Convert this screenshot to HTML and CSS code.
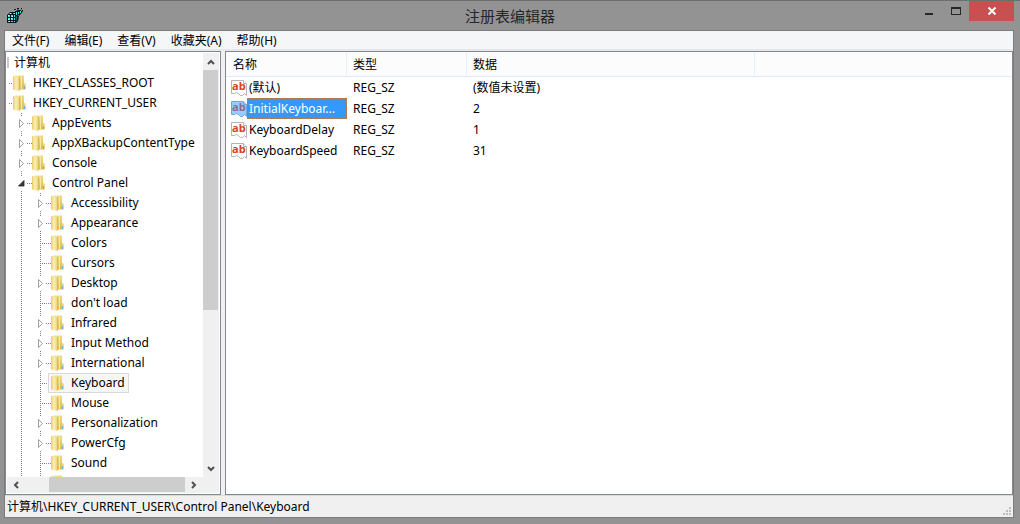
FILE: index.html
```
<!DOCTYPE html>
<html lang="zh-CN">

<head>
    <meta charset="utf-8">
    <meta name="viewport" content="width=device-width,initial-scale=1.0">
    <title>注册表编辑器</title>
    <link rel="stylesheet" href="styles.css">
</head>

<body>

    <svg class="defs" aria-hidden="true">
        <defs>
            <linearGradient id="front" x1="0" x2="1">
                <stop offset="0" stop-color="#e6cc6c" />
                <stop offset=".5" stop-color="#fbf1b4" />
                <stop offset="1" stop-color="#ecd67c" />
            </linearGradient>
            <linearGradient id="back" x1="0" x2=".3" y2="1">
                <stop offset="0" stop-color="#f5e594" />
                <stop offset="1" stop-color="#dcbe54" />
            </linearGradient>
            <symbol id="folder" viewBox="0 0 13 16">
                <path d="M2 .5H11V8L12.700 9V14.500H2Z" fill="url(#back)" />
                <path d="M0 1L6 2.500V16L0 14.500Z" fill="url(#front)" />
                <path d="M6 2.500L7 1.500V15L6 16Z" fill="#d8bb58" />
                <path d="M8 2H9V14H8Z" fill="#f6e9a6" />
                <path d="M11 8.500H12.700V14H11Z" fill="#efdc8c" />
                <path d="M11 11H12V14H11Z" fill="#5ab8e6" />
            </symbol>
            <symbol id="closed" viewBox="0 0 9 11">
                <path d="M2.500 1.500L6.500 5.500L2.500 9.500Z" fill="#fff" stroke="#a0a0a0" />
            </symbol>
            <symbol id="open" viewBox="0 0 9 11">
                <path d="M7 2.500V8H1.500Z" fill="#3c3c3c" stroke="#1e1e1e" stroke-width=".8" />
            </symbol>
            <symbol id="string" viewBox="0 0 16 16">
                <path class="page" d="M.5 .5H12.500L15.500 3.500V15.500L13.500 13.500L11.500 15.500H9.500L7.500 13.500L5.500 12.500L3.500 13.500H.5Z" />
                <path class="page" d="M12.500 .5V3.500H15.500" />
                <text x="1" y="10" class="ab">ab</text>
            </symbol>
        </defs>
    </svg>

    <header class="titlebar">
        <svg class="app-icon" viewBox="0 0 16 16" aria-hidden="true">
            <path d="M0 7L3 4H8V2H7V1H9V3L11 2L10 1V0H12V2H14V0H15V2H16V3L14 6L12 8L11 13L9 15H0Z" fill="#07191b" />
            <path d="M2 6L3 5H5L4 6ZM6 6L7 5H8V6Z" fill="#bff" />
            <path d="M1 7H3V9H1ZM4 7H6V9H4ZM1 10H3V12H1ZM4 10H6V12H4ZM1 13H3V14H1ZM4 13H6V14H4ZM7 7H8V9H7ZM7 10H8V12H7ZM7 13H8V14H7Z" fill="#3ee6ea" />
            <path d="M1 7H2V8H1ZM5 8H6V9H5ZM1 11H2V12H1ZM4 10H5V11H4ZM2 13H3V14H2Z" fill="#e8ffff" />
            <path d="M9 9L10 8V10L9 11ZM9 12L10 11V12L9 13ZM11 7H12V8H11Z" fill="#168f94" />
            <path d="M9 4H10V7H9ZM11 4H12V6H11ZM13 3H14V5H13ZM8 2H9V3H8Z" fill="#3ee6ea" />
            <path d="M11 1H12V2H11ZM14 1H15V3H14Z" fill="#20a0a6" />
        </svg>
        <h1>注册表编辑器</h1>
        <div class="controls">
            <button type="button" class="minimize" aria-label="最小化"><span></span></button>
            <button type="button" class="maximize" aria-label="最大化"><span></span></button>
            <button type="button" class="close" aria-label="关闭">
                <svg viewBox="0 0 10 8"><path d="M1.500 .5L8.500 7.500M8.500 .5L1.500 7.500" /></svg>
            </button>
        </div>
    </header>

    <main class="client">
        <nav class="menu">
            <button type="button">文件(F)</button>
            <button type="button">编辑(E)</button>
            <button type="button">查看(V)</button>
            <button type="button">收藏夹(A)</button>
            <button type="button">帮助(H)</button>
        </nav>

        <div class="panes">
            <section class="pane tree-pane">
                <div class="tree">
                    <div class="root">计算机</div>
                    <ul class="hives">
                        <li><div class="row hive"><span class="key"><svg><use href="#folder" /></svg>HKEY_CLASSES_ROOT</span></div></li>
                        <li>
                            <div class="row hive"><span class="key"><svg><use href="#folder" /></svg>HKEY_CURRENT_USER</span></div>
                            <ul class="branch">
                                <li class="row"><button type="button" class="toggle" aria-label="展开"><svg><use href="#closed" /></svg></button><span class="key"><svg><use href="#folder" /></svg>AppEvents</span></li>
                                <li class="row"><button type="button" class="toggle" aria-label="展开"><svg><use href="#closed" /></svg></button><span class="key"><svg><use href="#folder" /></svg>AppXBackupContentType</span></li>
                                <li class="row"><button type="button" class="toggle" aria-label="展开"><svg><use href="#closed" /></svg></button><span class="key"><svg><use href="#folder" /></svg>Console</span></li>
                                <li>
                                    <div class="row"><button type="button" class="toggle" aria-label="折叠"><svg><use href="#open" /></svg></button><span class="key"><svg><use href="#folder" /></svg>Control Panel</span></div>
                                    <ul class="branch">
                                        <li class="row"><button type="button" class="toggle" aria-label="展开"><svg><use href="#closed" /></svg></button><span class="key"><svg><use href="#folder" /></svg>Accessibility</span></li>
                                        <li class="row"><button type="button" class="toggle" aria-label="展开"><svg><use href="#closed" /></svg></button><span class="key"><svg><use href="#folder" /></svg>Appearance</span></li>
                                        <li class="row"><span class="key"><svg><use href="#folder" /></svg>Colors</span></li>
                                        <li class="row"><span class="key"><svg><use href="#folder" /></svg>Cursors</span></li>
                                        <li class="row"><button type="button" class="toggle" aria-label="展开"><svg><use href="#closed" /></svg></button><span class="key"><svg><use href="#folder" /></svg>Desktop</span></li>
                                        <li class="row"><span class="key"><svg><use href="#folder" /></svg>don't load</span></li>
                                        <li class="row"><button type="button" class="toggle" aria-label="展开"><svg><use href="#closed" /></svg></button><span class="key"><svg><use href="#folder" /></svg>Infrared</span></li>
                                        <li class="row"><button type="button" class="toggle" aria-label="展开"><svg><use href="#closed" /></svg></button><span class="key"><svg><use href="#folder" /></svg>Input Method</span></li>
                                        <li class="row"><button type="button" class="toggle" aria-label="展开"><svg><use href="#closed" /></svg></button><span class="key"><svg><use href="#folder" /></svg>International</span></li>
                                        <li class="row"><span class="key selected"><svg><use href="#folder" /></svg>Keyboard</span></li>
                                        <li class="row"><span class="key"><svg><use href="#folder" /></svg>Mouse</span></li>
                                        <li class="row"><button type="button" class="toggle" aria-label="展开"><svg><use href="#closed" /></svg></button><span class="key"><svg><use href="#folder" /></svg>Personalization</span></li>
                                        <li class="row"><button type="button" class="toggle" aria-label="展开"><svg><use href="#closed" /></svg></button><span class="key"><svg><use href="#folder" /></svg>PowerCfg</span></li>
                                        <li class="row"><span class="key"><svg><use href="#folder" /></svg>Sound</span></li>
                                        <li class="row"><span class="key"><svg><use href="#folder" /></svg></span></li>
                                    </ul>
                                </li>
                            </ul>
                        </li>
                    </ul>
                </div>
                <div class="scroll vertical">
                    <button type="button" aria-label="向上"><svg viewBox="0 0 8 8"><path d="M1 6L4 3L7 6" /></svg></button>
                    <div class="track"><div class="thumb"></div></div>
                    <button type="button" aria-label="向下"><svg viewBox="0 0 8 8"><path d="M1 2L4 5L7 2" /></svg></button>
                </div>
                <div class="scroll horizontal">
                    <button type="button" aria-label="向左"><svg viewBox="0 0 8 8"><path d="M6 1L3 4L6 7" /></svg></button>
                    <div class="track"><div class="thumb"></div></div>
                    <button type="button" aria-label="向右"><svg viewBox="0 0 8 8"><path d="M2 1L5 4L2 7" /></svg></button>
                </div>
            </section>

            <section class="pane value-pane">
                <table>
                    <thead>
                        <tr>
                            <th class="name">名称</th>
                            <th class="type">类型</th>
                            <th class="data">数据</th>
                            <th class="rest"></th>
                        </tr>
                    </thead>
                    <tbody>
                        <tr>
                            <td class="value"><div><svg><use href="#string" /></svg><span>(默认)</span></div></td>
                            <td>REG_SZ</td>
                            <td>(数值未设置)</td>
                            <td></td>
                        </tr>
                        <tr class="active">
                            <td class="value"><div><svg><use href="#string" /></svg><span>InitialKeyboar...</span></div></td>
                            <td>REG_SZ</td>
                            <td>2</td>
                            <td></td>
                        </tr>
                        <tr>
                            <td class="value"><div><svg><use href="#string" /></svg><span>KeyboardDelay</span></div></td>
                            <td>REG_SZ</td>
                            <td>1</td>
                            <td></td>
                        </tr>
                        <tr>
                            <td class="value"><div><svg><use href="#string" /></svg><span>KeyboardSpeed</span></div></td>
                            <td>REG_SZ</td>
                            <td>31</td>
                            <td></td>
                        </tr>
                    </tbody>
                </table>
            </section>
        </div>

        <footer class="status">
            <span>计算机\HKEY_CURRENT_USER\Control Panel\Keyboard</span>
            <svg class="grip" viewBox="0 0 8 8" aria-hidden="true">
                <path d="M6 0h2v2h-2zM3 3h2v2h-2zM6 3h2v2h-2zM0 6h2v2h-2zM3 6h2v2h-2zM6 6h2v2h-2z" />
            </svg>
        </footer>
    </main>

</body>

</html>
```
FILE: styles.css
```
* {
    box-sizing: border-box;
}

body {
    margin: 0;
    height: 100vh;
    padding-bottom: 6px;
    border-top: 1px solid #6e6e6e;
    background-color: #939393;
    color: #000;
    font-family: "Noto Sans", "Noto Sans CJK SC", sans-serif;
    font-size: 12px;
    line-height: 20px;
    display: flex;
    flex-direction: column;
    overflow: hidden;
}

button {
    margin: 0;
    padding: 0;
    border: 0;
    background: none;
    color: inherit;
    font: inherit;
}

svg {
    display: block;
    flex: none;
}

ul {
    margin: 0;
    padding: 0;
    list-style: none;
}

.defs {
    position: absolute;
    width: 0;
    height: 0;
}

/* title bar */

.titlebar {
    height: 29px;
    flex: none;
    padding: 0 6px;
    display: grid;
    grid-template-columns: 1fr auto 1fr;
    align-items: center;
}

.app-icon {
    width: 16px;
    height: 16px;
    margin-left: 1px;
}

.titlebar h1 {
    margin: 0;
    color: #262626;
    font-size: 15px;
    font-weight: normal;
}

.controls {
    align-self: start;
    display: flex;
    justify-content: flex-end;
}

.controls button {
    width: 27px;
    height: 20px;
    display: flex;
    align-items: center;
    justify-content: center;
}

.minimize span {
    width: 8px;
    height: 2px;
    margin-top: 6px;
    background-color: #262626;
}

.maximize span {
    width: 10px;
    height: 8px;
    border: 1px solid #262626;
    border-top-width: 2px;
}

.controls .close {
    width: 45px;
    background-color: #c75050;
}

.close svg {
    width: 10px;
    height: 8px;
    fill: none;
    stroke: #fff;
    stroke-width: 2;
}

/* client area */

.client {
    flex: 1;
    min-height: 0;
    margin: 0 6px 0 4px;
    border: 1px solid #7c7c7c;
    background-color: #f0f0f0;
    display: flex;
    flex-direction: column;
}

.menu {
    height: 20px;
    flex: none;
    background-color: #f5f6f7;
    border-bottom: 2px solid #e8e8ec;
    display: flex;
    gap: 1px;
}

.menu button {
    padding: 0 7px;
}

.panes {
    flex: 1;
    min-height: 0;
    display: flex;
    gap: 4px;
}

.pane {
    border: 1px solid #828790;
    background-color: #fff;
}

/* key tree */

.tree-pane {
    width: 216px;
    flex: none;
    padding: 1px;
    display: grid;
    grid-template: minmax(0, 1fr) 16px / minmax(0, 1fr) 16px;
}

.tree {
    overflow: hidden;
    white-space: nowrap;
}

.root {
    height: 20px;
    padding-left: 7px;
    background: linear-gradient(#c8c8c8, #c8c8c8) 0 4px / 2px 11px no-repeat;
}

.row {
    height: 20px;
    padding-left: 12px;
    display: flex;
    background: repeating-linear-gradient(90deg, #808080 0 1px, transparent 1px 2px) 4px 10px / 11px 1px no-repeat;
    position: relative;
}

.row.hive {
    padding-left: 3px;
    background-position: 2px 10px;
    background-size: 4px 1px;
}

.branch {
    padding-left: 10px;
    background: repeating-linear-gradient(#808080 0 1px, transparent 1px 2px) 14px 0 / 1px 100% no-repeat;
}

.branch .branch {
    padding-left: 19px;
    background-position: 23px 0;
}

/* the white box breaks the guide lines around the arrow */
.toggle {
    position: absolute;
    left: 0;
    top: 3px;
    width: 10px;
    height: 14px;
    background-color: #fff;
}

.toggle svg {
    width: 9px;
    height: 11px;
}

.key {
    height: 20px;
    padding: 0 3px 0 2px;
    border: 1px solid transparent;
    line-height: 18px;
    display: flex;
    align-items: center;
    gap: 7px;
}

.key svg {
    width: 13px;
    height: 16px;
}

.key.selected {
    border-color: #d9d9d9;
    background-color: #f7f7f7;
}

/* scroll bars */

.scroll {
    background-color: #f0f0f0;
    display: flex;
}

.scroll button {
    width: 17px;
    height: 17px;
    flex: none;
    display: flex;
    align-items: center;
    justify-content: center;
}

.scroll svg {
    width: 8px;
    height: 8px;
    fill: none;
    stroke: #505050;
    stroke-width: 2;
}

.track {
    flex: 1;
}

.thumb {
    background-color: #cdcdcd;
}

.vertical {
    flex-direction: column;
}

.vertical button {
    width: 15px;
}

.vertical .thumb {
    width: 15px;
    height: 240px;
}

.horizontal {
    grid-column: 1 / -1;
    padding-right: 17px;
}

.horizontal button {
    height: 15px;
}

.horizontal .thumb {
    width: 136px;
    height: 15px;
    margin-left: auto;
}

/* value list */

.value-pane {
    flex: 1;
    min-width: 0;
    overflow: hidden;
}

table {
    width: 100%;
    table-layout: fixed;
    border-collapse: separate;
    border-spacing: 0;
}

th {
    height: 25px;
    padding: 2px 0 0 6px;
    border-right: 1px solid #e5f0fa;
    border-bottom: 1px solid #e0ecfa;
    background-color: #fcfcfc;
    font-weight: normal;
    text-align: left;
}

.name {
    width: 121px;
    padding-left: 7px;
}

.type {
    width: 120px;
}

.data {
    width: 288px;
}

.rest {
    border-right: 0;
}

td {
    height: 21px;
    padding: 0 0 0 6px;
    white-space: nowrap;
}

td.value {
    padding-left: 5px;
}

.value div {
    display: flex;
    align-items: center;
}

.value svg {
    width: 16px;
    height: 16px;
}

.value span {
    height: 21px;
    padding-left: 2px;
    line-height: 21px;
}

.page {
    fill: var(--page, #fff);
    stroke: var(--edge, #b4b4b4);
}

.ab {
    fill: var(--ink, #d9431e);
    font-family: "Open Sans", sans-serif;
    font-size: 11px;
    font-weight: bold;
}

/* selected value: dotted focus box, icon tinted blue */
.active span {
    flex: 1;
    padding-left: 1px;
    border: 1px dotted #b87840;
    background-color: #3399ff;
    color: #fff;
    line-height: 19px;
}

.active svg {
    --page: #99ccff;
    --edge: #72a6da;
    --ink: #866e8f;
}

/* status bar */

.status {
    height: 22px;
    flex: none;
    padding: 1px 2px 0;
    border-top: 1px solid #d7dbe0;
    display: flex;
    justify-content: space-between;
}

.grip {
    width: 8px;
    height: 8px;
    margin-bottom: 2px;
    align-self: flex-end;
    fill: #bcbcbc;
}
```
